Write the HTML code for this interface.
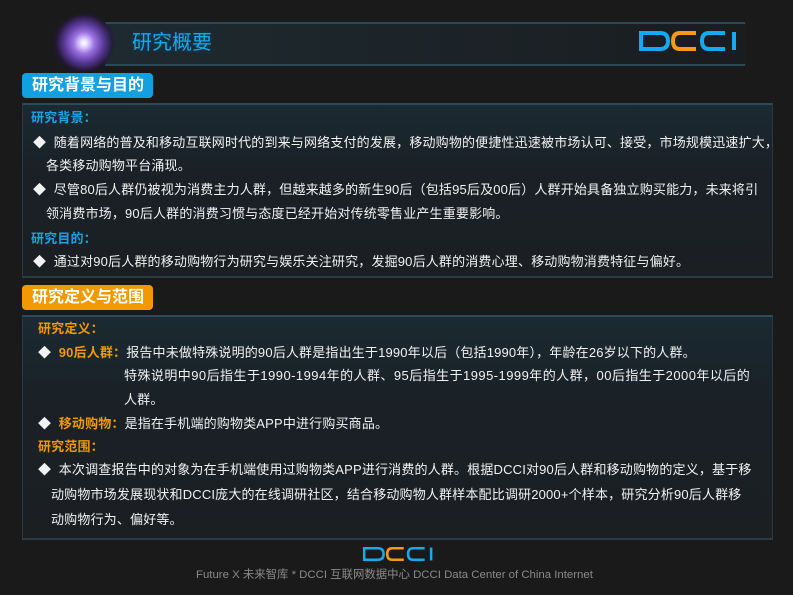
<!DOCTYPE html>
<html><head><meta charset="utf-8"><style>
body{margin:0;width:793px;height:595px;background:#1a1a1a;overflow:hidden;position:relative;font-family:"Liberation Sans","Noto Sans CJK SC",sans-serif;color:#f2f2f2}
.a{position:absolute;white-space:nowrap;font-size:13px;line-height:16px;letter-spacing:0.17px}
.hdr{position:absolute;left:105px;top:22px;width:640px;height:40px;background:linear-gradient(90deg,#1e2a30,#1b2125 70%,#1a1c1e);border-top:2px solid #2a4a58;border-bottom:2px solid #2a4a58}
.box{position:absolute;left:22px;width:749px;background:linear-gradient(180deg,#1b2a33,#1a2026 40%,#1b1f22);border-top:2px solid #2b4a5a;border-bottom:2px solid #2a3d46;border-left:1px solid #2a3a44;border-right:1px solid #2a3a44}
.lab{position:absolute;left:22px;width:131px;height:25px;border-radius:4px;color:#fff;font-weight:bold;font-size:16px;line-height:25px;text-indent:10px}
.b{color:#14a4e6;font-weight:bold}
.o{color:#f39800;font-weight:bold}
</style></head><body>
<div class="hdr"></div>
<div style="position:absolute;left:52px;top:14px;width:64px;height:58px;border-radius:50%;background:radial-gradient(circle,#fff 0,#e8dcff 8%,#9a70e0 25%,#5a3a9a 45%,rgba(40,20,70,.5) 65%,rgba(26,26,26,0) 75%)"></div>
<div class="a" style="left:132px;top:31px;font-size:20px;line-height:24px;color:#17a8ea;text-shadow:0 0 4px #0a4a70;letter-spacing:0">研究概要</div>
<svg style="position:absolute;left:638px;top:30px" width="100" height="22" viewBox="0 0 100 22">
<g fill="none" stroke-width="4">
<path d="M3 3H22Q30 3 30 11Q30 19 22 19H3Z" stroke="#13aaf0"/>
<path d="M58 3H42Q35 3 35 11Q35 19 42 19H58" stroke="#f59a12"/>
<path d="M87 3H71Q64 3 64 11Q64 19 71 19H87" stroke="#13aaf0"/>
<path d="M96 2V20" stroke="#13aaf0"/>
</g></svg>
<div class="lab" style="top:73px;background:#13a0e0">研究背景与目的</div>
<div class="box" style="top:103px;height:171px"></div>
<div class="a b" style="left:31px;top:110px">研究背景：</div>
<div class="a" style="left:33px;top:135px">◆&nbsp; 随着网络的普及和移动互联网时代的到来与网络支付的发展，移动购物的便捷性迅速被市场认可、接受，市场规模迅速扩大，</div>
<div class="a" style="left:46px;top:158px">各类移动购物平台涌现。</div>
<div class="a" style="left:33px;top:182px">◆&nbsp; 尽管80后人群仍被视为消费主力人群，但越来越多的新生90后（包括95后及00后）人群开始具备独立购买能力，未来将引</div>
<div class="a" style="left:46px;top:206px">领消费市场，90后人群的消费习惯与态度已经开始对传统零售业产生重要影响。</div>
<div class="a b" style="left:31px;top:231px">研究目的：</div>
<div class="a" style="left:33px;top:254px">◆&nbsp; 通过对90后人群的移动购物行为研究与娱乐关注研究，发掘90后人群的消费心理、移动购物消费特征与偏好。</div>
<div class="lab" style="top:285px;background:#f39800">研究定义与范围</div>
<div class="box" style="top:315px;height:221px"></div>
<div class="a o" style="left:38px;top:321px">研究定义：</div>
<div class="a" style="left:38px;top:345px">◆&nbsp; <span class="o">90后人群：</span>报告中未做特殊说明的90后人群是指出生于1990年以后（包括1990年），年龄在26岁以下的人群。</div>
<div class="a" style="left:124px;top:368px;letter-spacing:0.45px">特殊说明中90后指生于1990-1994年的人群、95后指生于1995-1999年的人群，00后指生于2000年以后的</div>
<div class="a" style="left:124px;top:392px">人群。</div>
<div class="a" style="left:38px;top:416px">◆&nbsp; <span class="o">移动购物：</span>是指在手机端的购物类APP中进行购买商品。</div>
<div class="a o" style="left:38px;top:439px">研究范围：</div>
<div class="a" style="left:38px;top:462px">◆&nbsp; 本次调查报告中的对象为在手机端使用过购物类APP进行消费的人群。根据DCCI对90后人群和移动购物的定义，基于移</div>
<div class="a" style="left:51px;top:487px">动购物市场发展现状和DCCI庞大的在线调研社区，结合移动购物人群样本配比调研2000+个样本，研究分析90后人群移</div>
<div class="a" style="left:51px;top:512px">动购物行为、偏好等。</div>
<svg style="position:absolute;left:362px;top:546px" width="72" height="16" viewBox="0 0 100 22">
<g fill="none" stroke-width="3.5">
<path d="M3 3H22Q30 3 30 11Q30 19 22 19H3Z" stroke="#13aaf0"/>
<path d="M58 3H42Q35 3 35 11Q35 19 42 19H58" stroke="#f59a12"/>
<path d="M87 3H71Q64 3 64 11Q64 19 71 19H87" stroke="#13aaf0"/>
<path d="M96 2V20" stroke="#13aaf0"/>
</g></svg>
<div class="a" style="left:196px;top:567px;font-size:11.4px;color:#8a8a8a;letter-spacing:0">Future X 未来智库 * DCCI 互联网数据中心 DCCI Data Center of China Internet</div>
</body></html>
